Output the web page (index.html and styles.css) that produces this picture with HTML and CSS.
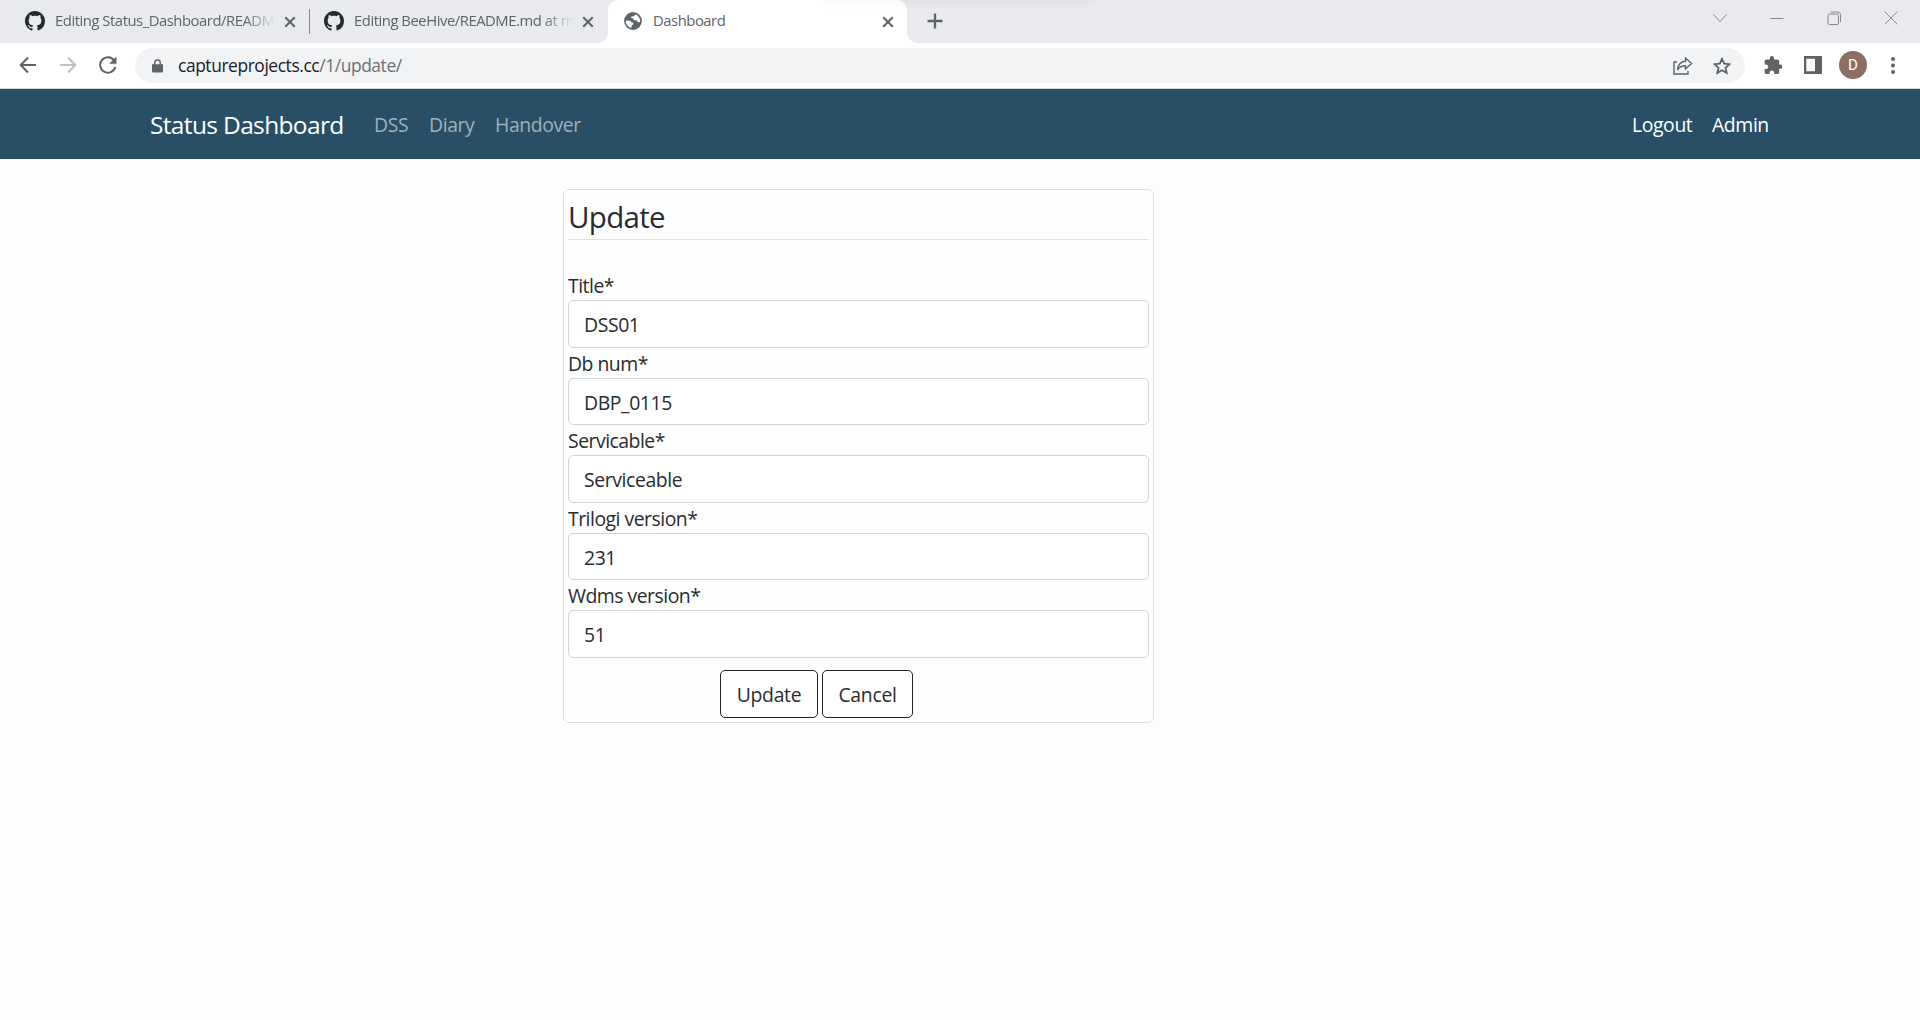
FILE: index.html
```html
<!DOCTYPE html>
<html lang="en">
<head>
<meta charset="utf-8">
<title>Dashboard</title>
<link rel="stylesheet" href="styles.css">
</head>
<body>
<svg class="defs" width="0" height="0">
  <symbol id="github" viewBox="0 0 16 16"><path d="M8 0C3.58 0 0 3.58 0 8c0 3.54 2.29 6.53 5.47 7.59.4.07.55-.17.55-.38 0-.19-.01-.82-.01-1.49-2.01.37-2.53-.49-2.69-.94-.09-.23-.48-.94-.82-1.13-.28-.15-.68-.52-.01-.53.63-.01 1.08.58 1.23.82.72 1.21 1.87.87 2.33.66.07-.52.28-.87.51-1.07-1.78-.2-3.64-.89-3.64-3.95 0-.87.31-1.59.82-2.15-.08-.2-.36-1.02.08-2.12 0 0 .67-.21 2.2.82.64-.18 1.32-.27 2-.27s1.36.09 2 .27c1.53-1.04 2.2-.82 2.2-.82.44 1.1.16 1.92.08 2.12.51.56.82 1.27.82 2.15 0 3.07-1.87 3.75-3.65 3.95.29.25.54.73.54 1.48 0 1.07-.01 1.93-.01 2.2 0 .21.15.46.55.38A8.01 8.01 0 0 0 16 8c0-4.42-3.58-8-8-8z"/></symbol>
  <symbol id="close" viewBox="0 0 12 12"><path d="M1.2 1.2l9.6 9.6M10.8 1.2L1.2 10.8" fill="none" stroke="currentColor" stroke-width="2"/></symbol>
</svg>
<header class="browser">
  <div class="tabstrip">
    <div class="tab">
      <svg class="favicon github"><use href="#github"/></svg>
      <span class="tab-title fade">Editing Status_Dashboard/READM</span>
      <svg class="tab-close"><use href="#close"/></svg>
    </div>
    <div class="tab second">
      <svg class="favicon github"><use href="#github"/></svg>
      <span class="tab-title fade">Editing BeeHive/README.md at m</span>
      <svg class="tab-close"><use href="#close"/></svg>
    </div>
    <div class="tab active">
      <svg class="favicon globe" viewBox="0 0 18 18"><circle cx="9" cy="9" r="8.9" fill="#5f6368"/><path d="M1.9 8.6l3.6.1c1.6 0 1.7 1 1.7 1.7l1.9.1v2l-1.6 1.3v2C4 15.300 1.700 12.400 1.900 8.600zM11.600 2.400c2.800 1.100 4.600 3.700 4.600 6.600-.6 1.300-1.600 1.500-2.500.9-.5-1.300-1.200-1.600-2.900-1.600-1.400 0-1.700-1.300-1-1.900l-1.900-.1c-1.100-.2-1-1.500-.1-1.700l1.900-.3z" fill="#fff"/></svg>
      <span class="tab-title">Dashboard</span>
      <svg class="tab-close"><use href="#close"/></svg>
    </div>
    <svg class="new-tab" viewBox="0 0 16 16"><path d="M8 .5v15M.5 8h15" stroke="#5f6368" stroke-width="2.300"/></svg>
    <div class="window-controls">
      <svg width="14" height="14" viewBox="0 0 14 14"><path d="M.5 3.500l6.500 7 6.500-7"/></svg>
      <svg width="14" height="14" viewBox="0 0 14 14"><path d="M.5 7.500h13"/></svg>
      <svg width="14" height="14" viewBox="0 0 14 14"><rect x="1" y="3" width="10.500" height="10.500" rx="1.500"/><path d="M3.500 1h7.500a2.500 2.500 0 0 1 2.500 2.500v7.500"/></svg>
      <svg width="14" height="14" viewBox="0 0 14 14"><path d="M.7.7l12.600 12.600M13.300.7L.7 13.300"/></svg>
    </div>
    <div class="top-shadow"></div>
  </div>
  <div class="toolbar">
    <div class="nav-buttons">
      <svg width="18" height="18" viewBox="0 0 18 18"><path d="M17 9H2M9 1.500L1.700 9 9 16.500"/></svg>
      <svg class="disabled" width="18" height="18" viewBox="0 0 18 18"><path d="M1 9h15M9 1.500L16.300 9 9 16.500"/></svg>
      <svg width="18" height="18" viewBox="0 0 18 18"><path d="M15.300 4.700A7.700 7.700 0 1 0 16.300 11"/><path class="solid" d="M17.500.5v7.300h-7.300z"/></svg>
    </div>
    <div class="omnibox">
      <svg class="lock" viewBox="0 0 12 14"><path d="M1.500 5h9A1.200 1.200 0 0 1 12 6.200v6.500a1.300 1.300 0 0 1-1.300 1.300H1.300A1.300 1.300 0 0 1 0 12.700V6.200A1.200 1.200 0 0 1 1.500 5z" fill="#5f6368"/><path d="M3 6V3.500a3 3 0 0 1 6 0V6" fill="none" stroke="#5f6368" stroke-width="1.500"/></svg>
      <span class="url"><b>captureprojects.cc</b>/1/update/</span>
      <svg class="share" width="20" height="18" viewBox="0 0 20 18"><path d="M4 5H1v12h14v-3" /><path d="M12.500 1l6 5.500-6 5.500V8.800c-4 0-6.300 1.200-8 4 .4-4.600 3-8 8-8.500z"/></svg>
      <svg class="star" width="18" height="18" viewBox="0 0 18 18"><path d="M9 1.800l2.200 4.900 5.300.5-4 3.500 1.200 5.200L9 13.200l-4.700 2.700 1.200-5.200-4-3.500 5.300-.5z"/></svg>
    </div>
    <div class="toolbar-actions">
      <svg width="18" height="18" viewBox="1.500 1 20.500 21"><path fill="#5f6368" d="M20.500 11H19V7c0-1.100-.9-2-2-2h-4V3.500a2.500 2.500 0 0 0-5 0V5H4c-1.100 0-1.990.9-1.990 2v3.800H3.500c1.490 0 2.700 1.210 2.700 2.700s-1.210 2.700-2.700 2.700H2V20c0 1.100.9 2 2 2h3.800v-1.500c0-1.490 1.210-2.700 2.700-2.700 1.490 0 2.700 1.210 2.700 2.700V22H17c1.100 0 2-.9 2-2v-4h1.500a2.500 2.500 0 0 0 0-5z"/></svg>
      <svg width="18" height="18" viewBox="0 0 18 18"><path fill="#5f6368" fill-rule="evenodd" d="M0 0h18v18H0zM2.300 2.800v12.400h8.700V2.800z"/></svg>
      <span class="avatar">D</span>
      <svg class="menu" width="4" height="17" viewBox="0 0 4 17"><g fill="#5f6368"><circle cx="2" cy="2" r="2"/><circle cx="2" cy="8.500" r="2"/><circle cx="2" cy="15" r="2"/></g></svg>
    </div>
  </div>
</header>
<nav class="navbar">
  <a class="brand">Status Dashboard</a>
  <a class="dss">DSS</a><a class="diary">Diary</a><a class="handover">Handover</a>
  <a class="logout">Logout</a><a class="admin">Admin</a>
</nav>
<main>
  <form class="card">
    <h1>Update</h1>
    <label>Title*</label><input value="DSS01">
    <label>Db num*</label><input value="DBP_0115">
    <label>Servicable*</label><input value="Serviceable">
    <label>Trilogi version*</label><input value="231">
    <label>Wdms version*</label><input value="51">
    <div class="buttons"><button type="button" class="update">Update</button><button type="button" class="cancel">Cancel</button></div>
  </form>
</main>
</body>
</html>
```
FILE: styles.css
```css
* { box-sizing: border-box; }
body { margin: 0; height: 1020px; overflow: hidden; background: #fdfdfd; color: #282c30; font: 19.4px/30px "Open Sans", "Noto Sans", sans-serif; letter-spacing: -.4px; }
svg { display: block; flex: none; }
.defs { position: absolute; }
.tabstrip { display: flex; height: 43px; background: #e8eaed; align-items: center; color: #5f6368; position: relative; overflow: hidden; }
.top-shadow { position: absolute; left: 825px; top: -8px; width: 270px; height: 8px; box-shadow: 0 0 12px rgba(0, 0, 0, .07); }
.tab { display: flex; align-items: center; height: 43px; width: 310px; padding: 0 13px 0 25px; border-right: 1px solid transparent; }
.tab.second { width: 298px; padding-left: 14px; position: relative; }
.tab.second::before { content: ""; position: absolute; left: -1px; top: 9px; width: 1px; height: 25px; background: #85888d; }
.tab.active { width: 299px; background: #fff; border: 0; border-radius: 10px 10px 0 0; padding: 0 13px 0 16px; position: relative; }
.tab.active::before, .tab.active::after { content: ""; position: absolute; bottom: 0; width: 10px; height: 10px; }
.tab.active::before { left: -10px; background: radial-gradient(circle at 0 0, transparent 9.5px, #fff 10px); }
.tab.active::after { right: -10px; background: radial-gradient(circle at 100% 0, transparent 9.5px, #fff 10px); }
.favicon { width: 20px; height: 20px; fill: #24292f; margin: -1px 10px 0 0; }
.favicon.globe { width: 18px; height: 18px; margin-right: 11px; }
.tab-title { flex: 1; min-width: 0; white-space: nowrap; font-size: 14.8px; line-height: 40px; padding-bottom: 3px; letter-spacing: -.45px; }
.fade { -webkit-mask-image: linear-gradient(90deg, #000 calc(100% - 40px), transparent calc(100% - 9px)); mask-image: linear-gradient(90deg, #000 calc(100% - 40px), transparent calc(100% - 9px)); }
.tab-close { width: 12px; height: 12px; color: #5f6368; }
.new-tab { width: 16px; height: 16px; margin: -1px 0 0 20px; }
.window-controls { display: flex; margin: -7px 22px 0 auto; gap: 43px; }
.window-controls svg { fill: none; stroke: #85868a; }
.toolbar { display: flex; align-items: center; height: 46px; background: #fff; border-bottom: 1px solid #d3d5d6; }
.nav-buttons { display: flex; gap: 22px; width: 135px; padding-left: 19px; margin-top: -1px; }
.nav-buttons svg, .omnibox .share, .omnibox .star { fill: none; stroke: #5f6368; stroke-width: 2; }
.nav-buttons .disabled { stroke: #bdbfc2; }
.nav-buttons .solid { fill: #5f6368; stroke: none; }
.omnibox { display: flex; align-items: center; width: 1610px; height: 35px; border-radius: 18px; background: #f1f3f4; padding: 0 14px 0 17px; }
.lock { width: 11px; height: 14px; margin-right: 15px; }
.url { flex: 1; font-size: 17.4px; letter-spacing: -.42px; line-height: 35px; color: #6c7074; }
.url b { font-weight: 400; color: #202124; }
.omnibox .share { margin-right: 20px; stroke-width: 1.4; }
.omnibox .star { stroke-width: 1.8; }
.toolbar-actions { display: flex; align-items: center; padding-left: 19px; margin-top: -1px; }
.toolbar-actions > :nth-child(2) { margin-left: 22px; }
.avatar { width: 28px; height: 28px; margin-left: 17px; border-radius: 50%; background: #8d6e63; color: #fff; font: 15px/28px Roboto, sans-serif; letter-spacing: 0; text-align: center; }
.menu { margin-left: 24px; }
.navbar { display: flex; align-items: center; height: 70px; background: #294f66; padding: 1px 150px 0; color: #9fafba; white-space: nowrap; }
.brand { width: 224px; font-size: 24.5px; letter-spacing: -.65px; color: #fff; }
.dss { width: 55px; }
.diary { width: 66px; }
.logout { margin-left: auto; width: 80px; color: #fff; }
.admin { width: 58px; color: #fff; }
main { display: flex; padding: 30px 0 0 563px; }
.card { width: 591px; height: 534px; border: 1px solid #dcdddf; border-radius: 6px; padding: 4px; background: #fefefe; display: flex; flex-direction: column; }
h1 { margin: 0 0 30px; height: 46px; border-bottom: 1px solid #dee2e6; font-size: 29.5px; letter-spacing: -.7px; font-weight: 400; line-height: 45px; }
label { height: 30px; line-height: 31px; letter-spacing: -.5px; }
input { height: 47.5px; width: 581px; border: 1px solid #ced4da; border-radius: 5px; padding: 2px 15px 0; font: inherit; letter-spacing: inherit; color: inherit; background: #fff; }
.buttons { display: flex; gap: 4px; margin: 12px 0 0 152px; }
button { height: 48px; border: 1px solid #212529; border-radius: 5px; background: #fff; color: inherit; font: inherit; letter-spacing: -.3px; padding: 2px 0 0; }
.update { width: 98px; }
.cancel { width: 91px; }
```
